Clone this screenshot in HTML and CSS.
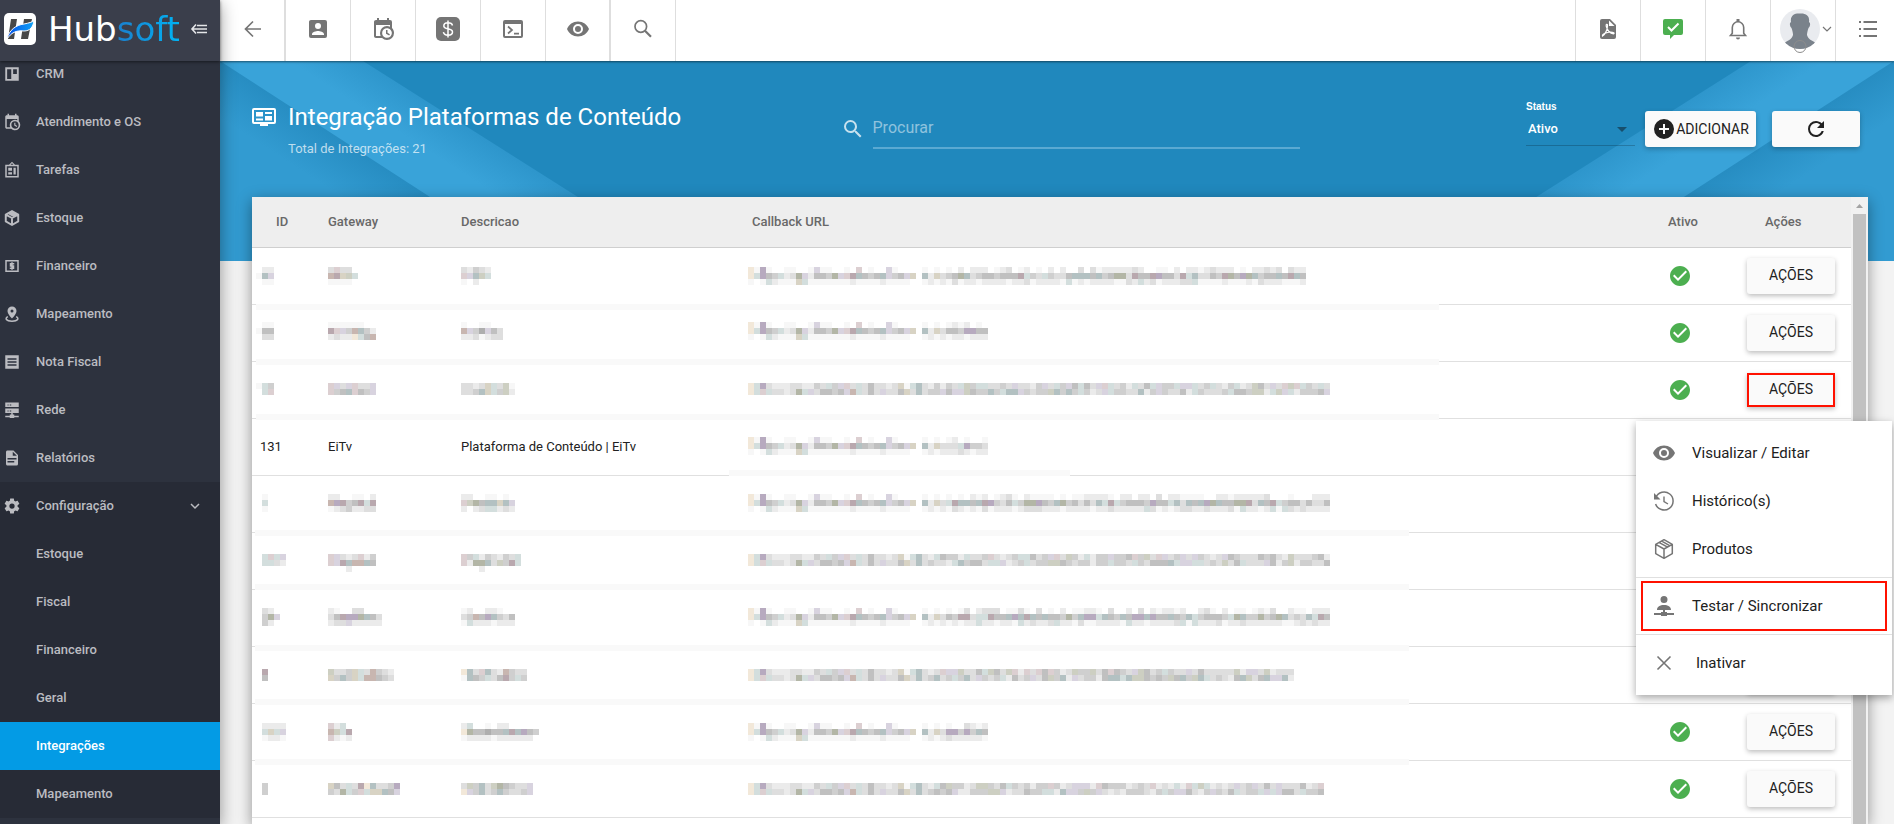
FILE: index.html
```html
<!DOCTYPE html>
<html lang="pt-BR">
<head>
<meta charset="utf-8">
<title>Hubsoft - Integração Plataformas de Conteúdo</title>
<link rel="stylesheet" href="styles.css">
</head>
<body>
<svg class="sprite" aria-hidden="true">
  <defs>
    <symbol id="i-eye" viewBox="0 0 24 24"><path d="M12,9A3,3 0 0,0 9,12A3,3 0 0,0 12,15A3,3 0 0,0 15,12A3,3 0 0,0 12,9M12,17A5,5 0 0,1 7,12A5,5 0 0,1 12,7A5,5 0 0,1 17,12A5,5 0 0,1 12,17M12,4.5C7,4.5 2.73,7.61 1,12C2.73,16.39 7,19.5 12,19.5C17,19.5 21.27,16.39 23,12C21.27,7.61 17,4.5 12,4.5Z"/></symbol>
    <symbol id="i-check" viewBox="0 0 24 24"><path d="M12 2C6.5 2 2 6.5 2 12S6.5 22 12 22 22 17.5 22 12 17.5 2 12 2M10 17L5 12L6.41 10.59L10 14.17L17.59 6.58L19 8L10 17Z"/></symbol>
    <symbol id="i-calendar" viewBox="0 0 24 24"><path d="M15,13H16.5V15.82L18.94,17.23L18.19,18.53L15,16.69V13M19,8H5V19H9.67C9.24,18.09 9,17.07 9,16A7,7 0 0,1 16,9C17.07,9 18.09,9.24 19,9.67V8M5,21C3.89,21 3,20.1 3,19V5C3,3.89 3.89,3 5,3H6V1H8V3H16V1H18V3H19A2,2 0 0,1 21,5V11.1C22.24,12.36 23,14.09 23,16A7,7 0 0,1 16,23C14.09,23 12.36,22.24 11.1,21H5M16,11.15A4.85,4.85 0 0,0 11.15,16C11.15,18.68 13.32,20.85 16,20.85A4.85,4.85 0 0,0 20.85,16C20.85,13.32 18.68,11.15 16,11.15Z"/></symbol>
    <symbol id="i-package" viewBox="0 0 24 24"><g fill="none" stroke="currentColor" stroke-linejoin="round"><path d="M12 2.7L20.3 7.4V16.6L12 21.3L3.7 16.6V7.4ZM3.7 7.4L12 12L20.3 7.4M12 12V21.3M7.3 5.6L15.6 10.2M9.8 4.1L18 8.8"/></g></symbol>
  </defs>
</svg>

<div class="app">
  <aside class="sidebar">
    <div class="brand">
      <svg class="brand-mark" viewBox="0 0 32 32" aria-hidden="true">
        <defs><linearGradient id="swoosh" x1="0" x2="1"><stop offset="0" stop-color="#0550e8"/><stop offset="1" stop-color="#11a3f5"/></linearGradient></defs>
        <rect width="32" height="32" rx="5" fill="#fff"/>
        <path d="M7 6H13L10 26H4ZM20 6H28L24 26H17Z" fill="#484848"/>
        <path d="M3 26C5 17 12 12 20 11C25 10 28 9 30 8C29 14 26 18 20 18C12 17 7 20 3 26Z" fill="url(#swoosh)" stroke="#fff" stroke-width="1"/>
      </svg>
      <span class="brand-name">Hub<span class="brand-tail">soft</span></span>
      <button class="fold" type="button" aria-label="Recolher menu">
        <svg viewBox="0 0 18 18" aria-hidden="true"><path d="M6 4.500L2 9L6 13.500M2.500 9H17M7 5.500H17M7 12.500H17" fill="none" stroke="currentColor" stroke-width="1.600"/></svg>
      </button>
    </div>
    <nav class="nav">
      <ul class="nav-list">
        <li><a class="nav-link" href="#"><svg class="nav-icon" viewBox="0 0 24 24"><path fill-rule="evenodd" d="M3 3H21V21H3ZM5.500 5.500V18.500H11V5.500ZM13.500 5.500V12H18.500V5.500Z"/></svg>CRM</a></li>
        <li><a class="nav-link" href="#"><svg class="nav-icon"><use href="#i-calendar"/></svg>Atendimento e OS</a></li>
        <li><a class="nav-link" href="#"><svg class="nav-icon" viewBox="0 0 24 24"><path fill-rule="evenodd" d="M3 5H8L12 1L16 5H21V22H3ZM5 7V20H19V7ZM7 9H12V13H7ZM14 9H17V18H14ZM7 15H12V18H7ZM12 3L10 5H14Z"/></svg>Tarefas</a></li>
        <li><a class="nav-link" href="#"><svg class="nav-icon" stroke-width="2.600"><use href="#i-package"/></svg>Estoque</a></li>
        <li><a class="nav-link" href="#"><svg class="nav-icon" viewBox="0 0 24 24"><path fill-rule="evenodd" d="M3 4H21V20H3ZM5 6V18H19V6Z"/><path d="M15 9H10V12H14V15H9M12 7V17" fill="none" stroke="currentColor" stroke-width="2"/></svg>Financeiro</a></li>
        <li><a class="nav-link" href="#"><svg class="nav-icon" viewBox="0 0 24 24"><path fill-rule="evenodd" d="M12 2A6 6 0 0 1 18 8C18 12 12 18 12 18S6 12 6 8A6 6 0 0 1 12 2ZM12 6A2 2 0 0 0 12 10A2 2 0 0 0 12 6Z"/><path d="M6.500 15.500C2 18 4 21.500 12 21.500S22 18 17.500 15.500" fill="none" stroke="currentColor" stroke-width="2"/></svg>Mapeamento</a></li>
        <li><a class="nav-link" href="#"><svg class="nav-icon" viewBox="0 0 24 24"><path fill-rule="evenodd" d="M3 3H21V21H3ZM6 7V9H18V7ZM6 11V13H18V11ZM6 15V17H18V15Z"/></svg>Nota Fiscal</a></li>
        <li><a class="nav-link" href="#"><svg class="nav-icon" viewBox="0 0 24 24"><path fill-rule="evenodd" d="M3 2H21V8H3ZM3 10H21V16H3ZM11 16H13V18H15V19.500H21V21.500H15V22.500H9V21.500H3V19.500H9V18H11ZM6 4.500V6H7.500V4.500ZM9 4.500V6H11V4.500ZM6 12.500V14H7.500V12.500ZM9 12.500V14H11V12.500Z"/></svg>Rede</a></li>
        <li><a class="nav-link" href="#"><svg class="nav-icon" viewBox="0 0 24 24"><path d="M13,9H18.5L13,3.5V9M6,2H14L20,8V20A2,2 0 0,1 18,22H6C4.890,22 4,21.1 4,20V4C4,2.890 4.890,2 6,2M15,18V16H6V18H15M18,14V12H6V14H18Z"/></svg>Relatórios</a></li>
        <li class="nav-group">
          <a class="nav-link" href="#" aria-expanded="true"><svg class="nav-icon" viewBox="0 0 24 24"><path d="M12,15.5A3.5,3.5 0 0,1 8.5,12A3.5,3.5 0 0,1 12,8.5A3.5,3.5 0 0,1 15.5,12A3.5,3.5 0 0,1 12,15.5M19.43,12.97C19.47,12.65 19.5,12.33 19.5,12C19.5,11.67 19.47,11.34 19.43,11L21.54,9.37C21.73,9.22 21.78,8.95 21.66,8.73L19.66,5.27C19.54,5.05 19.27,4.96 19.05,5.05L16.56,6.05C16.04,5.66 15.5,5.32 14.87,5.07L14.5,2.42C14.46,2.18 14.25,2 14,2H10C9.75,2 9.54,2.18 9.5,2.42L9.13,5.07C8.5,5.32 7.96,5.66 7.44,6.05L4.95,5.05C4.73,4.96 4.46,5.05 4.34,5.27L2.34,8.73C2.21,8.95 2.27,9.22 2.46,9.37L4.57,11C4.53,11.34 4.5,11.67 4.5,12C4.5,12.33 4.53,12.65 4.57,12.97L2.46,14.63C2.27,14.78 2.21,15.05 2.34,15.27L4.34,18.73C4.46,18.95 4.73,19.03 4.95,18.95L7.44,17.94C7.96,18.34 8.5,18.68 9.13,18.93L9.5,21.58C9.54,21.82 9.75,22 10,22H14C14.25,22 14.46,21.82 14.5,21.58L14.87,18.93C15.5,18.67 16.04,18.34 16.56,17.94L19.05,18.95C19.27,19.03 19.54,18.95 19.66,18.73L21.66,15.27C21.78,15.05 21.73,14.78 21.54,14.63L19.43,12.97Z"/></svg>Configuração<svg class="nav-caret" viewBox="0 0 10 10"><path d="M1 3L5 7L9 3" fill="none" stroke="currentColor" stroke-width="1.500"/></svg></a>
          <ul class="nav-sub">
            <li><a class="nav-link" href="#">Estoque</a></li>
            <li><a class="nav-link" href="#">Fiscal</a></li>
            <li><a class="nav-link" href="#">Financeiro</a></li>
            <li><a class="nav-link" href="#">Geral</a></li>
            <li><a class="nav-link is-active" href="#" aria-current="page">Integrações</a></li>
            <li><a class="nav-link" href="#">Mapeamento</a></li>
          </ul>
        </li>
      </ul>
    </nav>
  </aside>

  <div class="page">
    <header class="topbar">
      <div class="tools">
        <button class="tool tool-back" type="button" aria-label="Voltar"><svg viewBox="0 0 24 24"><path d="M20 12H5M12 4.500L4.500 12L12 19.500" fill="none" stroke="currentColor" stroke-width="1.700"/></svg></button>
        <button class="tool" type="button" aria-label="Clientes"><svg viewBox="0 0 24 24"><path d="M6,17C6,15 10,13.9 12,13.9C14,13.9 18,15 18,17V18H6M15,9A3,3 0 0,1 12,12A3,3 0 0,1 9,9A3,3 0 0,1 12,6A3,3 0 0,1 15,9M3,5V19A2,2 0 0,0 5,21H19A2,2 0 0,0 21,19V5A2,2 0 0,0 19,3H5C3.89,3 3,3.9 3,5Z"/></svg></button>
        <button class="tool" type="button" aria-label="Agenda"><svg><use href="#i-calendar"/></svg></button>
        <button class="tool" type="button" aria-label="Financeiro"><svg viewBox="0 0 24 24"><rect width="24" height="24" rx="5"/><path d="M16.500 8.500C16 6.500 14.500 5.800 12 5.800C9.500 5.800 7.800 7 7.800 9C7.800 13 16.500 10.500 16.500 15C16.500 17 14.800 18.200 12 18.200C9.500 18.200 7.800 17.200 7.400 15.200M12 3.500V20.500" fill="none" stroke="#fff" stroke-width="1.500"/></svg></button>
        <button class="tool" type="button" aria-label="Terminal"><svg viewBox="0 0 24 24"><path fill-rule="evenodd" d="M4 3H20A2 2 0 0 1 22 5V19A2 2 0 0 1 20 21H4A2 2 0 0 1 2 19V5A2 2 0 0 1 4 3ZM4 7V19H20V7Z"/><path d="M7 9.500L11 13L7 16.500M13 16.700H18" fill="none" stroke="currentColor" stroke-width="1.700"/></svg></button>
        <button class="tool tool-edge" type="button" aria-label="Visualizar"><svg><use href="#i-eye"/></svg></button>
        <button class="tool" type="button" aria-label="Buscar"><svg viewBox="0 0 24 24"><circle cx="9.800" cy="9.500" r="5.800" fill="none" stroke="currentColor" stroke-width="1.700"/><path d="M14 13.800L20 19.800" stroke="currentColor" stroke-width="2.200"/></svg></button>
      </div>
      <div class="tools tools-end">
        <button class="tool" type="button" aria-label="PDF"><svg viewBox="0 0 24 24"><path d="M6 2H14L20 8V20A2 2 0 0 1 18 22H6A2 2 0 0 1 4 20V4A2 2 0 0 1 6 2Z"/><path d="M13 3.500V9H18.500Z" fill="#fff"/><path d="M6.500 19C9 17.500 11.500 13 11.500 8.500C11.500 6.500 9.500 7 10.300 9.500C11.500 13.500 14 16.500 17.500 16.800C19 16.500 17.500 15 14.500 15C11 15.200 6 17 6.500 19Z" fill="none" stroke="#fff" stroke-width="1.200"/></svg></button>
        <button class="tool tool-ok" type="button" aria-label="Mensagens"><svg viewBox="0 0 24 24"><path d="M4 2H20A2 2 0 0 1 22 4V16A2 2 0 0 1 20 18H13L9 22V18H4A2 2 0 0 1 2 16V4A2 2 0 0 1 4 2Z"/><path d="M7 10L10.500 13.500L17.500 6.500" fill="none" stroke="#fff" stroke-width="2"/></svg></button>
        <button class="tool" type="button" aria-label="Notificações"><svg viewBox="0 0 24 24"><path d="M4.500 18.500H19.500L17.700 16.300V10.500A5.700 5.700 0 0 0 6.300 10.500V16.300Z" fill="none" stroke="currentColor" stroke-width="1.600"/><path d="M10.500 2H13.500V5H10.500ZM10 20.500H14A2 2 0 0 1 10 20.500Z"/></svg></button>
        <button class="tool tool-user" type="button" aria-label="Usuário">
          <svg class="avatar" viewBox="0 0 40 46"><defs><clipPath id="disc"><circle cx="20" cy="20" r="20"/></clipPath></defs><circle cx="20" cy="20" r="20" fill="#e9ebef"/><g clip-path="url(#disc)"><path d="M11 13C10 6 15 4 20 4.500C26 4 30 7 29 13C31 14 30 18 28.500 19C27.500 22 27 24 27 26C28 30 31 31 36 34V41H4V34C9 31 12 30 13 26C13 24 12.500 22 11.500 19C10 18 9 14 11 13Z" fill="#7a828b"/></g><path d="M15 40H25A5.500 5.500 0 0 1 15 40Z" fill="#fff"/><circle cx="20" cy="37.500" r="6" fill="none" stroke="#8c8c8c"/></svg>
          <svg class="caret" viewBox="0 0 10 10"><path d="M1 3L5 7L9 3" fill="none" stroke="currentColor" stroke-width="1.200"/></svg>
        </button>
        <button class="tool tool-last" type="button" aria-label="Opções"><svg viewBox="0 0 24 24"><path d="M3 5H5M3 12H5M3 19H5M7.500 5H21M7.500 12H21M7.500 19H21" fill="none" stroke="currentColor" stroke-width="2"/></svg></button>
      </div>
    </header>

    <main class="main">
      <div class="hero">
        <svg class="rays" viewBox="0 0 460 200" aria-hidden="true">
          <defs>
            <linearGradient id="low" gradientUnits="userSpaceOnUse" x1="100" y1="65" x2="74" y2="105"><stop offset="0" stop-color="#278dc2"/><stop offset="1" stop-color="#329bd1"/></linearGradient>
            <linearGradient id="band" gradientUnits="userSpaceOnUse" x1="238" y1="61" x2="216" y2="95"><stop offset="0" stop-color="#2e96cc"/><stop offset="1" stop-color="#39a3d9"/></linearGradient>
          </defs>
          <path d="M0 0H143L459 200H0Z" fill="url(#band)"/>
          <path d="M0 0L309 200H0Z" fill="url(#low)"/>
        </svg>
        <svg class="rays rays-end" viewBox="0 0 460 200" aria-hidden="true">
          <path d="M0 0H143L459 200H0Z" fill="url(#band)"/>
          <path d="M0 0L309 200H0Z" fill="url(#low)"/>
        </svg>
        <div class="hero-row">
          <div class="heading">
            <svg class="heading-icon" viewBox="0 0 24 24" aria-hidden="true"><path fill-rule="evenodd" d="M2 3H22A2 2 0 0 1 24 5V17A2 2 0 0 1 22 19H16V21H8V19H2A2 2 0 0 1 0 17V5A2 2 0 0 1 2 3ZM2 5V17H22V5ZM4 7H11V11.500H4ZM13 7H20V9H13ZM13 11H20V15.500H13ZM4 13.500H11V15.500H4Z"/></svg>
            <div>
              <h1 class="title">Integração Plataformas de Conteúdo</h1>
              <p class="subtitle">Total de Integrações: 21</p>
            </div>
          </div>
          <label class="search">
            <svg class="search-icon" viewBox="0 0 24 24" aria-hidden="true"><path d="M9.5,3A6.5,6.5 0 0,1 16,9.5C16,11.11 15.41,12.59 14.44,13.73L14.71,14H15.5L20.5,19L19,20.5L14,15.5V14.71L13.73,14.44C12.59,15.41 11.11,16 9.5,16A6.5,6.5 0 0,1 3,9.5A6.5,6.5 0 0,1 9.5,3M9.5,5C7,5 5,7 5,9.5C5,12 7,14 9.5,14C12,14 14,12 14,9.5C14,7 12,5 9.5,5Z"/></svg>
            <input class="search-input" type="text" placeholder="Procurar" aria-label="Procurar">
          </label>
          <div class="controls">
            <div class="status">
              <label class="status-label" for="status">Status</label>
              <div class="status-box">
                <select class="status-select" id="status"><option>Ativo</option><option>Inativo</option></select>
                <svg class="status-arrow" viewBox="0 0 10 5" aria-hidden="true"><path d="M0 0H10L5 5Z"/></svg>
              </div>
            </div>
            <button class="btn btn-add" type="button"><svg viewBox="0 0 24 24" aria-hidden="true"><path d="M17,13H13V17H11V13H7V11H11V7H13V11H17M12,2A10,10 0 0,0 2,12A10,10 0 0,0 12,22A10,10 0 0,0 22,12A10,10 0 0,0 12,2Z"/></svg>ADICIONAR</button>
            <button class="btn btn-refresh" type="button" aria-label="Atualizar"><svg viewBox="0 0 24 24" aria-hidden="true"><path d="M17.65,6.35C16.2,4.9 14.21,4 12,4A8,8 0 0,0 4,12A8,8 0 0,0 12,20C15.73,20 18.84,17.45 19.73,14H17.65C16.83,16.33 14.61,18 12,18A6,6 0 0,1 6,12A6,6 0 0,1 12,6C13.66,6 15.14,6.69 16.22,7.78L13,11H20V4L17.65,6.35Z"/></svg></button>
          </div>
        </div>
      </div>

      <section class="card">
        <div class="table-wrap">
          <table class="table">
            <thead>
              <tr>
                <th class="col-id" scope="col">ID</th>
                <th class="col-gateway" scope="col">Gateway</th>
                <th class="col-desc" scope="col">Descricao</th>
                <th class="col-url" scope="col">Callback URL</th>
                <th class="col-active" scope="col">Ativo</th>
                <th class="col-actions" scope="col">Ações</th>
              </tr>
            </thead>
            <tbody id="rows"></tbody>
          </table>
        </div>
        <div class="scrollbar" aria-hidden="true">
          <svg class="scroll-up" viewBox="0 0 17 17"><path d="M5 11H12L8.500 7Z" fill="#a3a3a3"/></svg>
          <div class="scroll-thumb"></div>
        </div>
      </section>

      <div class="menu" role="menu">
        <button class="menu-item" type="button" role="menuitem"><svg><use href="#i-eye"/></svg>Visualizar / Editar</button>
        <button class="menu-item" type="button" role="menuitem"><svg viewBox="0 0 24 24"><path d="M3.800 8.500A9 9 0 1 1 3.600 15" fill="none" stroke="currentColor" stroke-width="1.500"/><path d="M2 4V10.500H8.500Z"/><path d="M12 7.500V12.500L16 15" fill="none" stroke="currentColor" stroke-width="1.400"/></svg>Histórico(s)</button>
        <button class="menu-item" type="button" role="menuitem"><svg stroke-width="1.500"><use href="#i-package"/></svg>Produtos</button>
        <hr class="menu-line">
        <button class="menu-item is-marked" type="button" role="menuitem"><svg viewBox="0 0 24 24"><path d="M12 2A3.500 3.500 0 0 1 12 9A3.500 3.500 0 0 1 12 2ZM5 16C5 12.500 8 11 12 11S19 12.500 19 16H13V18H15V19H22V21H15V22H9V21H2V19H9V18H11V16Z"/></svg>Testar / Sincronizar</button>
        <hr class="menu-line">
        <button class="menu-item menu-item-far" type="button" role="menuitem"><svg viewBox="0 0 24 24"><path d="M5.500 5.500L18.500 18.500M18.500 5.500L5.500 18.500" fill="none" stroke="currentColor" stroke-width="1.600"/></svg>Inativar</button>
      </div>
    </main>
  </div>
</div>
<script src="script.js"></script>
</body>
</html>
```

FILE: styles.css
```css
* { box-sizing: border-box; }

body {
  margin: 0;
  height: 100vh;
  overflow: hidden;
  background: #f3f3f3;
  color: #212121;
  font: 14px/20px Roboto, "Noto Sans", sans-serif;
}

button, input, select { font: inherit; color: inherit; }
button { cursor: pointer; }
svg { display: block; fill: currentColor; flex: none; }
ul { list-style: none; margin: 0; padding: 0; }
a { color: inherit; text-decoration: none; }

.sprite { position: absolute; width: 0; height: 0; }

.app { display: flex; height: 100vh; }

/* Sidebar */
.sidebar {
  position: relative;
  z-index: 3;
  display: flex;
  flex-direction: column;
  flex: none;
  width: 220px;
  background: #2d323e;
  box-shadow: 0 4px 16px rgba(0, 0, 0, 0.4);
}
.brand {
  position: relative;
  z-index: 1;
  display: flex;
  align-items: center;
  flex: none;
  height: 61px;
  padding: 0 12px 4px 4px;
  background: #3a3e4b;
  box-shadow: 0 1px 3px rgba(0, 0, 0, 0.5);
  color: #fff;
}
.brand-mark { width: 32px; height: 32px; margin-right: 12px; }
.brand-name { flex: 1; font: 34px/40px "DejaVu Sans", sans-serif; }
.brand-tail {
  background: linear-gradient(90deg, #1b7fcd, #00b4f5);
  -webkit-background-clip: text;
  background-clip: text;
  color: transparent;
}
.fold { padding: 0; border: 0; background: none; color: #e4e5e8; }
.fold svg { width: 18px; height: 18px; }

.nav { flex: 1; min-height: 0; overflow: hidden; }
.nav-list { margin-top: -11px; }
.nav-link {
  display: flex;
  align-items: center;
  height: 48px;
  padding: 0 20px 0 36px;
  color: #bbbcc1;
  font-size: 13px;
  font-weight: 500;
}
.nav-icon { width: 18px; height: 18px; margin-left: -33px; margin-right: 15px; }
.nav-caret { width: 10px; height: 10px; margin-left: auto; }
.nav-group { background: #272b36; }
.nav-link.is-active { background: #039be5; color: #fff; }

/* Top bar */
.page { display: flex; flex-direction: column; flex: 1; min-width: 0; }
.topbar {
  position: relative;
  z-index: 2;
  display: flex;
  justify-content: space-between;
  flex: none;
  height: 61px;
  background: #fff;
  box-shadow: 0 1px 2px rgba(0, 0, 0, 0.5);
}
.tools { display: flex; }
.tool {
  display: flex;
  align-items: center;
  justify-content: center;
  width: 65px;
  padding: 0 0 4px;
  border: 0;
  border-right: 1px solid #dedede;
  background: none;
  color: #757575;
}
.tool svg { width: 24px; height: 24px; }
.tool-back { width: 66px; padding-left: 2px; border-right-width: 2px; }
.tool-edge { border-right-width: 2px; }
.tools-end .tool { border-right: 0; border-left: 1px solid #dedede; }
.tool-ok { color: #4caf50; }
.tools-end .tool-user { gap: 2px; padding: 2px 0 0 5px; }
.tool-user .avatar { width: 40px; height: 46px; }
.tool-user .caret { width: 10px; height: 10px; margin-bottom: 6px; }
.tools-end .tool-last { width: 59px; justify-content: flex-start; padding-left: 20px; }

/* Hero */
.main {
  position: relative;
  display: flex;
  flex-direction: column;
  flex: 1;
  min-height: 0;
}
.hero {
  position: absolute;
  top: 0;
  left: 0;
  right: 0;
  height: 200px;
  background: #2088bd;
  color: #fff;
}
.rays { position: absolute; top: 0; left: 0; width: 460px; height: 200px; }
.rays-end { left: auto; right: 0; transform: scaleX(-1); }
.hero-row {
  position: relative;
  display: grid;
  grid-template-columns: 36.6% 28.6% 1fr;
  align-items: center;
  height: 136px;
  padding: 0 34px 0 32px;
}
.heading { display: flex; gap: 12px; }
.heading-icon { width: 24px; height: 24px; margin-top: 6px; }
.title { margin: 0; font-size: 24px; font-weight: 400; line-height: 36px; }
.subtitle { margin: 4px 0 0; font-size: 13px; line-height: 20px; color: rgba(255, 255, 255, 0.7); }
.search { display: flex; align-items: center; gap: 8px; }
.search-icon { width: 24px; height: 24px; color: rgba(255, 255, 255, 0.75); }
.search-input {
  flex: 1;
  min-width: 0;
  height: 40px;
  padding: 0 0 2px;
  border: 0;
  border-bottom: 2px solid #5aa9d2;
  border-radius: 0;
  background: none;
  font-size: 16px;
  outline: 0;
}
.search-input::placeholder { color: rgba(255, 255, 255, 0.5); }
.controls { display: flex; align-items: center; justify-content: flex-end; }
.status { width: 109px; margin-right: 10px; padding-bottom: 12px; }
.status-label { display: block; font: bold 10px/12px "Liberation Sans", sans-serif; }
.status-box { position: relative; border-bottom: 1px solid rgba(0, 0, 0, 0.2); }
.status-select {
  width: 100%;
  height: 32px;
  padding: 0 2px;
  border: 0;
  background: none;
  appearance: none;
  font-size: 13px;
  font-weight: 500;
}
.status-arrow { position: absolute; top: 14px; right: 8px; width: 10px; height: 5px; color: #174f6d; }

.btn {
  display: inline-flex;
  align-items: center;
  justify-content: center;
  width: 88px;
  height: 36px;
  padding: 0 0 2px;
  border: 0;
  border-radius: 3px;
  background: #fafafa;
  box-shadow: 0 2px 5px rgba(0, 0, 0, 0.26);
  color: #212121;
  font-size: 14px;
  font-weight: 400;
}
.btn svg { width: 24px; height: 24px; }
.btn-add { width: 111px; margin-right: 16px; padding-bottom: 0; }
.btn-refresh { padding-bottom: 0; }

/* Table card */
.card {
  position: relative;
  display: flex;
  flex: 1;
  min-height: 0;
  margin: 136px 26px 0 32px;
  overflow: hidden;
  background: #fff;
}
.main::after {
  content: "";
  position: absolute;
  top: 136px;
  bottom: 0;
  left: 32px;
  right: 26px;
  box-shadow: 0 4px 14px rgba(0, 0, 0, 0.4);
  pointer-events: none;
}
.table-wrap { flex: 1; min-width: 0; overflow: hidden; }
.table { width: 100%; border-spacing: 0; table-layout: fixed; }
.table th {
  height: 51px;
  padding: 0;
  border-bottom: 1px solid #cfcfcf;
  background: #eee;
  color: #686868;
  font-size: 13px;
  font-weight: 500;
  text-align: left;
}
.table td {
  position: relative;
  height: 57px;
  padding: 0;
  border-bottom: 1px solid #e0e0e0;
  font-size: 13px;
}
.table .col-id { width: 76px; padding-left: 24px; }
.col-gateway { width: 133px; }
.col-desc { width: 287px; }
.table .col-url { padding-left: 4px; }
.table .col-active { width: 100px; padding-left: 6px; text-align: center; }
.table .col-actions { width: 121px; padding-left: 35px; }
.table .cell-id { padding-left: 4px; }
.table .cell-id-text { padding-left: 8px; }
.table .cell-actions { padding-left: 17px; }
.cell-active svg { width: 24px; height: 24px; margin: 0 auto; color: #4caf50; }
.table .btn.is-marked { height: 34px; border: 2px solid #f10; border-radius: 0; }
.band { position: absolute; z-index: 1; height: 6px; background: #f9f9f9; }

.scrollbar { flex: none; width: 17px; background: #f1f1f1; }
.scroll-up { width: 17px; height: 17px; }
.scroll-thumb { width: 13px; height: 100%; margin: 0 auto; background: #c1c1c1; }

/* Row menu */
.menu {
  position: absolute;
  z-index: 2;
  top: 360px;
  right: 2px;
  width: 256px;
  padding: 8px 0;
  background: #fff;
  box-shadow: 0 3px 8px rgba(0, 0, 0, 0.35);
}
.menu-item {
  display: flex;
  align-items: center;
  gap: 16px;
  width: 100%;
  height: 48px;
  padding: 0 16px;
  border: 0;
  background: none;
  font-size: 15px;
}
.menu-item svg { width: 24px; height: 24px; color: #757575; }
.menu-item.is-marked { outline: 2px solid #f10; outline-offset: -1px; width: 244px; margin-left: 6px; padding: 0 10px; }
.menu-item-far { gap: 20px; }
.menu-line { height: 1px; margin: 4px 0; border: 0; background: #e0e0e0; }
```

FILE: script.js
```js
// Colours of the masked cells, keyed by one letter each.
const TONES = {
  a: "#f7f7f7", b: "#ebebeb", c: "#dedede", d: "#cfcfcf", e: "#c0c0c0", f: "#aeaeae",
  p: "#dccfd1", P: "#b9a8ae", t: "#d3dedd", T: "#b3c1c2", v: "#d8d3df", V: "#b7aabf",
  y: "#f2e8d9", Y: "#d8d3c4", g: "#cdcfc2", G: "#b3b6a6", r: "#c8b6b0"
};

const URL_HEAD = {
  top: "yaVa..aa..avaa..a.p.a..va....a.a.a",
  mid: "ytVedtbcGvbeedGvpPTedeTvdevY.TbYc",
  low: "a.atbaaaYtaaaaaaabaaaabaaaa..abab"
};

// Fills the text mask beyond the shared address prefix.
function urlMask(length, tall, seed) {
  let state = seed * 7919 + 17;
  const next = (set) => {
    state = (state * 1103515245 + 12345) % 2147483648;
    return set[Math.floor(state / 65536) % set.length];
  };
  const sets = tall ? ["ab.bcab.", "deTeGdVPtce", "abbabcbt"] : ["ctdcevbcgdp", "cdetbdvgdcT"];
  const heads = tall ? [URL_HEAD.top, URL_HEAD.mid, URL_HEAD.low]
                     : ["ytVcbbbccbbdctdvpctceccbcYatTcb", "ytptccbcGtvceedevrtcecvcceYcTcd"];
  return heads.map((head, i) => {
    let line = head.slice(0, length);
    while (line.length < length) line += next(sets[i]);
    return line;
  }).join("/");
}

const rows = [
  { y: 6, id: ".bb/aTv/.aa", gw: "cpcc./rPYgt/aaaa.", desc: "cbdcb/pvTgt/a.b..", url: [93, 1], band: [4, 56, 1183] },
  { y: 4, id: ".aa/aee/.cc", gw: "aaaaaa../PpvdrTdb/bcbbyter", desc: "a..aa../rvdfvec/bbcabcc", url: [40, 1], band: [4, 54, 1183] },
  { y: 8, id: "atd/.tp", gw: "pvcvpccv/pdeTpedv", desc: "ccbcYtcga/ccdTYtdgb", url: [97, 0], band: [4, 52, 1183] },
  { y: 5, id: 131, gw: "EiTv", desc: "Plataforma de Conteúdo | EiTv", url: [40, 1], band: [477, 51, 341] },
  { y: 5, id: ".a/.t/.a", gw: "bb..aa.b/rVPdePtP/abcdbbcc", desc: "bb..aa.a./pgGeTTYTv/b.bcttbcb", url: [97, 1], band: [3, 54, 1154] },
  { y: 8, id: ".tptv/.ttcb", gw: "pvcbcpbd/pvPTrrTe/...b....", desc: "pdtbdcbdct/pbGGTcgdPt/...b......", url: [97, 0], band: [3, 51, 1154] },
  { y: 5, id: ".cb/.dGv/.db.", gw: "ba..cc.../cePVVGTec/bccvbbbbb", desc: "ab..bba../cdreVTdce/atbbbabbb", url: [97, 1], band: [3, 55, 1154] },
  { y: 9, id: ".P/.e", gw: "gccdYtcrdcb/YdTdYtrredc", desc: "yTcpTcbrdcc/aTedtcePdtd", url: [91, 0], band: [3, 52, 1154] },
  { y: 6, id: ".bbbb/.tYtv/.abba", gw: "pbt./rgtP/pbab", desc: "bt..a.bb..../yGeefeeTPTVed/abbbbabbbbbb", url: [40, 1], band: [3, 55, 1154] },
  { y: 9, id: ".d/.d", gw: "YectcPyTccdV/dcGtdptYYTev", desc: "cgdTcgGedccv/yvdTcdTdccdv", url: [96, 0] }
];

function mosaic(mask, top) {
  const lines = mask.split("/");
  const width = Math.max(...lines.map((line) => line.length)) * 6;
  let cells = "";
  lines.forEach((line, row) => {
    [...line].forEach((tone, col) => {
      if (TONES[tone]) {
        cells += `<rect x="${col * 6}" y="${top + row * 6}" width="6" height="6" fill="${TONES[tone]}"/>`;
      }
    });
  });
  return `<svg width="${width}" height="30" shape-rendering="crispEdges" aria-hidden="true">${cells}</svg>`;
}

document.getElementById("rows").innerHTML = rows.map((row, index) => {
  const plain = row.id === 131;
  const draw = (value) => (plain ? value : mosaic(value, row.y));
  const band = row.band
    ? `<span class="band" style="left:${row.band[0]}px;top:${row.band[1]}px;width:${row.band[2]}px"></span>`
    : "";
  const marked = index === 2 ? " is-marked" : "";
  return `<tr>
    <td class="${plain ? "cell-id-text" : "cell-id"}">${draw(row.id)}${band}</td>
    <td>${draw(row.gw)}</td>
    <td>${draw(row.desc)}</td>
    <td>${mosaic(urlMask(row.url[0], row.url[1], index + 1), row.y)}</td>
    <td class="cell-active"><svg role="img" aria-label="Ativo"><use href="#i-check"/></svg></td>
    <td class="cell-actions"><button class="btn${marked}" type="button">AÇÕES</button></td>
  </tr>`;
}).join("");
```
